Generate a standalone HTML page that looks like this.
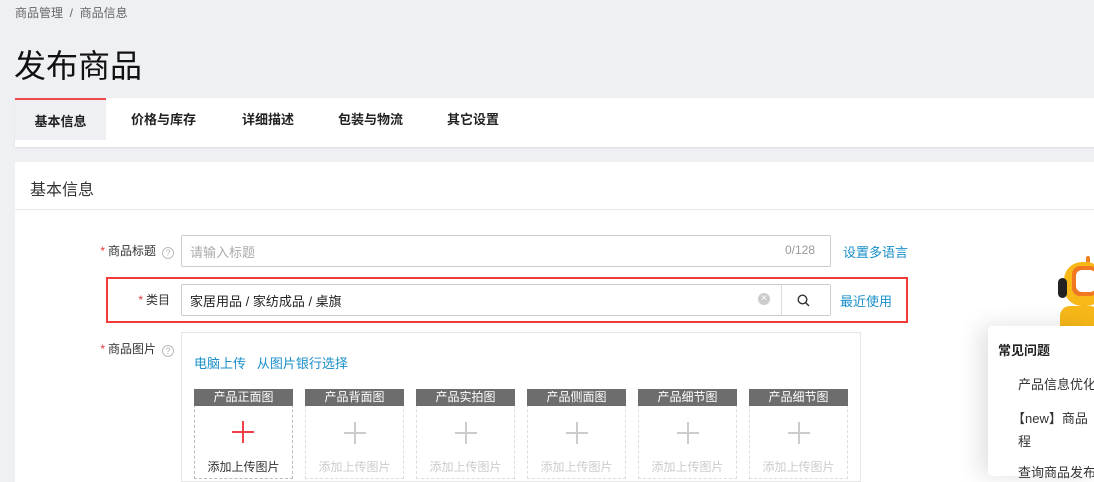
<!DOCTYPE html>
<html><head><meta charset="utf-8"><style>
*{margin:0;padding:0;box-sizing:border-box}
body{width:1094px;height:472px;overflow:hidden;background:#eff0f3;font-family:"Liberation Sans","Noto Sans CJK SC",sans-serif;position:relative;color:#333}
.a{position:absolute}
.crumb{left:15px;top:4px;font-size:12px;color:#666}
.h1{left:14px;top:41px;font-size:32px;color:#111}
.tabs{left:15px;top:98px;width:1079px;height:49px;background:#fff;box-shadow:0 1px 2px rgba(0,0,0,.08)}
.tab{position:absolute;top:0;height:42px;line-height:44px;font-size:13px;font-weight:bold;color:#222}
.card{left:15px;top:162px;width:1079px;height:320px;background:#fff}
.lbl{font-size:12px;color:#333;text-align:right}
.lbl b{color:#e4393c;font-weight:normal;margin-right:3px}
.q{display:inline-block;width:12px;height:12px;border:1px solid #bbb;border-radius:50%;font-size:9px;line-height:10px;text-align:center;color:#bbb;margin-left:6px;vertical-align:-1px}
.inp{border:1px solid #ccc;border-radius:2px;background:#fff}
.link{color:#1a8fc9;font-size:13px}
.slot{position:absolute;top:389px;width:99px;height:90px;border:1px dashed #ddd}
.slot .t{height:17px;background:#6d6d6d;color:#fff;font-size:12px;text-align:center;line-height:17px;margin:-1px -1px 0}
.slot .p{position:absolute;left:38px;top:32px;width:22px;height:22px}
.slot .p:before{content:"";position:absolute;left:10px;top:0;width:2px;height:22px;background:#ccc}
.slot .p:after{content:"";position:absolute;top:10px;left:0;height:2px;width:22px;background:#ccc}
.slot .s{position:absolute;top:68px;width:100%;text-align:center;font-size:12px;color:#ccc}
</style></head><body>
<div class="a crumb">商品管理 &nbsp;/&nbsp; 商品信息</div>
<div class="a h1">发布商品</div>
<div class="a tabs">
 <div class="tab" style="left:0;width:91px;background:#eff0f3;border-top:2px solid #f04a4a;text-align:center">基本信息</div>
 <div class="tab" style="left:116px">价格与库存</div>
 <div class="tab" style="left:227px">详细描述</div>
 <div class="tab" style="left:323px">包装与物流</div>
 <div class="tab" style="left:432px">其它设置</div>
</div>
<div class="a card">
 <div class="a" style="left:15px;top:14px;font-size:16px;color:#333">基本信息</div>
 <div class="a" style="left:0;top:47px;width:1079px;height:1px;background:#e8e8e8"></div>
</div>
<div class="a lbl" style="left:60px;top:242px;width:114px"><b>*</b>商品标题<span class="q">?</span></div>
<div class="a inp" style="left:181px;top:235px;height:32px;width:650px"></div>
<div class="a" style="left:190px;top:242px;font-size:13px;color:#aaa">请输入标题</div>
<div class="a" style="left:785px;top:243px;font-size:12px;color:#999">0/128</div>
<div class="a link" style="left:843px;top:242px">设置多语言</div>

<div class="a" style="left:106px;top:277px;width:802px;height:46px;border:2px solid #f23a3a"></div>
<div class="a lbl" style="left:120px;top:291px;width:50px"><b>*</b>类目</div>
<div class="a inp" style="left:181px;top:284px;width:650px;height:32px"></div>
<div class="a" style="left:781px;top:285px;width:1px;height:30px;background:#ddd"></div>
<div class="a" style="left:190px;top:291px;font-size:13px;color:#222">家居用品 / 家纺成品 / 桌旗</div>
<div class="a" style="left:758px;top:293px;width:12px;height:12px;border-radius:50%;background:#ccc;color:#fff;font-size:10px;line-height:12px;text-align:center">×</div>
<svg class="a" style="left:797px;top:294px" width="13" height="13" viewBox="0 0 13 13"><circle cx="5.5" cy="5.5" r="4.3" fill="none" stroke="#333" stroke-width="1.4"/><path d="M8.6 8.6L12 12" stroke="#333" stroke-width="1.5"/></svg>
<div class="a link" style="left:840px;top:291px">最近使用</div>

<div class="a lbl" style="left:60px;top:340px;width:114px"><b>*</b>商品图片<span class="q">?</span></div>
<div class="a" style="left:181px;top:332px;width:680px;height:150px;border:1px solid #e6e6e6"></div>
<div class="a link" style="left:194px;top:353px">电脑上传 &nbsp;&nbsp;从图片银行选择</div>
<div class="slot" style="left:194px;border-color:#bbb"><div class="t">产品正面图</div><div class="s" style="color:#333">添加上传图片</div></div>
<div class="slot" style="left:305px"><div class="t">产品背面图</div><div class="p"></div><div class="s">添加上传图片</div></div>
<div class="slot" style="left:416px"><div class="t">产品实拍图</div><div class="p"></div><div class="s">添加上传图片</div></div>
<div class="slot" style="left:527px"><div class="t">产品侧面图</div><div class="p"></div><div class="s">添加上传图片</div></div>
<div class="slot" style="left:638px"><div class="t">产品细节图</div><div class="p"></div><div class="s">添加上传图片</div></div>
<div class="slot" style="left:749px"><div class="t">产品细节图</div><div class="p"></div><div class="s">添加上传图片</div></div>
<div class="a" style="left:232px;top:421px;width:22px;height:22px"><div class="a" style="left:10px;top:0;width:2px;height:22px;background:#f03e4a"></div><div class="a" style="left:0;top:10px;width:22px;height:2px;background:#f03e4a"></div></div>

<div class="a" style="left:1086px;top:256px;width:4px;height:8px;background:#f08020;border-radius:2px"></div>
<div class="a" style="left:1064px;top:262px;width:40px;height:44px;background:#f7b818;border-radius:18px"></div>
<div class="a" style="left:1072px;top:266px;width:26px;height:30px;background:#f07820;border-radius:8px"></div>
<div class="a" style="left:1076px;top:270px;width:20px;height:22px;background:#fff;border-radius:6px"></div>
<div class="a" style="left:1058px;top:278px;width:9px;height:20px;background:#222;border-radius:5px"></div>
<div class="a" style="left:1060px;top:306px;width:40px;height:24px;background:#f7b818;border-radius:10px 10px 0 0"></div>
<div class="a" style="left:988px;top:326px;width:110px;height:150px;background:#fff;border-radius:4px;box-shadow:-8px 0 24px rgba(0,0,0,.12)">
 <div class="a" style="left:10px;top:14px;font-size:13px;font-weight:bold;color:#222;white-space:nowrap">常见问题</div>
 <div class="a" style="left:30px;top:48px;font-size:13px;white-space:nowrap">产品信息优化</div>
 <div class="a" style="left:24px;top:82px;font-size:13px;white-space:nowrap">【new】商品</div>
 <div class="a" style="left:30px;top:105px;font-size:13px">程</div>
 <div class="a" style="left:30px;top:136px;font-size:13px;white-space:nowrap">查询商品发布</div>
</div>
</body></html>
